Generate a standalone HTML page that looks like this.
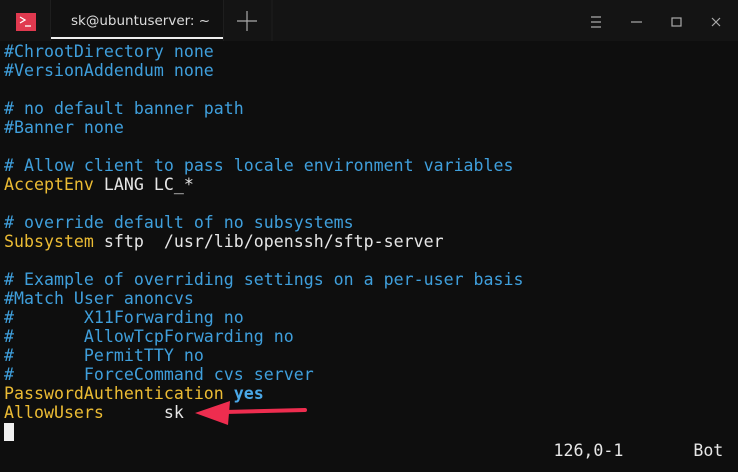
<!DOCTYPE html>
<html><head><style>
html,body{margin:0;padding:0;background:#0e0e0e;width:738px;height:472px;overflow:hidden}
.tb{position:absolute;left:0;top:0;width:738px;height:41px;background:#141414}
.tab{position:absolute;left:50px;top:0;width:172px;height:41px;background:#111;border-right:1px solid #1e1e1e;border-left:1px solid #1e1e1e}
.tab span{position:absolute;left:20px;top:13px;font:13.5px "DejaVu Sans","Liberation Sans",sans-serif;color:#ddd}
.ul{position:absolute;left:0;bottom:2px;width:172px;height:2px;background:#eee}
.icon{position:absolute;left:16px;top:13px;width:20px;height:18px;background:#e0394f}
pre{position:absolute;left:4px;top:41.5px;margin:0;font:16.6px/19px "DejaVu Sans Mono","Liberation Mono",monospace;color:#e6e6e6}
.c{color:#3f9fdc}.y{color:#ecbc34}.b{color:#4aa8e8;font-weight:bold}
.cur{display:inline-block;width:10px;height:18px;background:#f0f0f0;vertical-align:-4px}
</style></head><body>
<div class="tb">
<div class="icon"><svg width="20" height="18"><path d="M4 4 L9 7 L4 10" stroke="#fff" stroke-width="1.3" fill="none"/><path d="M9 13 H15" stroke="#fff" stroke-width="1.3"/></svg></div>
<div class="tab"><span>sk@ubuntuserver: ~</span><div class="ul"></div></div>
<svg style="position:absolute;left:222px;top:0" width="516" height="41">
<path d="M15 21 H35 M25 11 V31" stroke="#aaa" stroke-width="1.2"/>
<line x1="50" y1="0" x2="50" y2="41" stroke="#1e1e1e"/>
<path d="M369 17 H379 M369 22 H379 M369 27 H379" stroke="#aaa" stroke-width="1.2"/>
<path d="M409 22 H420" stroke="#aaa" stroke-width="1.2"/>
<rect x="450" y="18" width="9" height="8" stroke="#aaa" stroke-width="1.2" fill="none"/>
<path d="M490 18 L498 26 M498 18 L490 26" stroke="#aaa" stroke-width="1.2"/>
</svg>
</div>
<pre><span class="c">#ChrootDirectory none
#VersionAddendum none

# no default banner path
#Banner none

# Allow client to pass locale environment variables</span>
<span class="y">AcceptEnv</span> LANG LC_*

<span class="c"># override default of no subsystems</span>
<span class="y">Subsystem</span> sftp  /usr/lib/openssh/sftp-server

<span class="c"># Example of overriding settings on a per-user basis
#Match User anoncvs
#       X11Forwarding no
#       AllowTcpForwarding no
#       PermitTTY no
#       ForceCommand cvs server</span>
<span class="y">PasswordAuthentication</span> <span class="b">yes</span>
<span class="y">AllowUsers</span>      sk
<span class="cur"></span>
                                                       126,0-1       Bot</pre>
<svg style="position:absolute;left:190px;top:398px" width="120" height="30">
<path d="M115 12 L35 14" stroke="#ee2d4f" stroke-width="4" stroke-linecap="round"/>
<path d="M5 15 L40 3 L38 27 Z" fill="#ee2d4f"/>
</svg>
</body></html>
